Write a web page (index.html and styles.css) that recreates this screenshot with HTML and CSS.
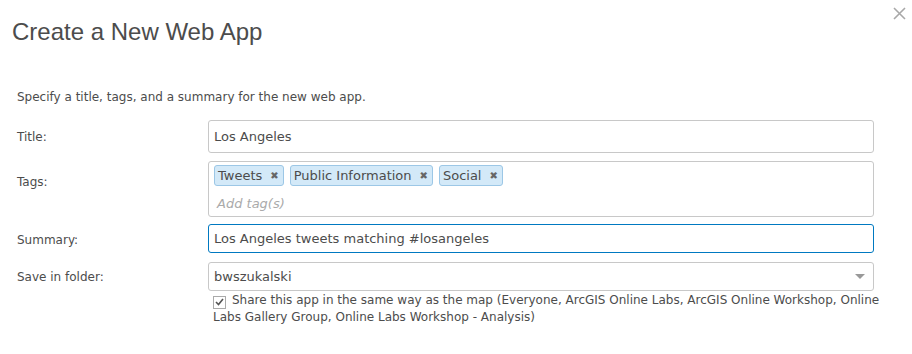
FILE: index.html
```html
<!DOCTYPE html>
<html lang="en">
<head>
  <meta charset="UTF-8">
  <title>Create a New Web App</title>
  <link rel="stylesheet" href="styles.css">
</head>
<body>
  <div class="dialog">
    <div class="dialog-header">
      <h1 class="dialog-title">Create a New Web App</h1>
      <span class="close-btn">
        <svg width="13" height="13" viewBox="0 0 13 13"><path d="M1 1 L12 12 M12 1 L1 12" stroke="#a8a8a8" stroke-width="1.6" fill="none"/></svg>
      </span>
    </div>

    <p class="intro">Specify a title, tags, and a summary for the new web app.</p>

    <div class="form">
      <label class="form-label row-title">Title:</label>
      <div class="form-control input-title">Los Angeles</div>

      <label class="form-label row-tags">Tags:</label>
      <div class="form-control tag-box">
        <div class="tag-list">
          <span class="tag">Tweets <span class="tag-x">&#x2716;</span></span>
          <span class="tag">Public Information <span class="tag-x">&#x2716;</span></span>
          <span class="tag">Social <span class="tag-x">&#x2716;</span></span>
        </div>
        <div class="tag-placeholder">Add tag(s)</div>
      </div>

      <label class="form-label row-summary">Summary:</label>
      <div class="form-control input-summary focused">Los Angeles tweets matching #losangeles</div>

      <label class="form-label row-folder">Save in folder:</label>
      <div class="folder-col">
        <div class="form-control select">
          <span>bwszukalski</span>
          <span class="caret"></span>
        </div>
        <div class="share">
          <span class="checkbox">
            <svg width="9" height="8" viewBox="0 0 9 8"><path d="M1 4 L3.5 6.5 L8 1" stroke="#555" stroke-width="1.6" fill="none"/></svg>
          </span>Share this app in the same way as the map (Everyone, ArcGIS Online Labs, ArcGIS Online Workshop, Online Labs Gallery Group, Online Labs Workshop - Analysis)
        </div>
      </div>
    </div>
  </div>
</body>
</html>
```

FILE: styles.css
```css
:root {
  --text-color: #4c4c4c;
  --border-color: #c8c8c8;
  --focus-color: #0079c1;
  --tag-bg: #d3e9f8;
  --tag-border: #9cc7e6;
}

body {
  margin: 0;
  background-color: #fff;
  font-family: 'DejaVu Sans', Verdana, sans-serif;
  font-size: 12px;
  color: var(--text-color);
}

.dialog {
  width: 912px;
  height: 354px;
  box-sizing: border-box;
  padding: 0 38px 0 17px;
}

.dialog-header {
  display: flex;
  justify-content: space-between;
  align-items: flex-start;
  height: 87px;
}

.dialog-title {
  margin: 18px 0 0 -5px;
  font-family: 'Liberation Sans', Arial, sans-serif;
  font-size: 24px;
  font-weight: 400;
  color: var(--text-color);
}

.close-btn {
  margin: 7px -32px 0 0;
  display: flex;
}

.intro {
  margin: 0 0 13px;
  line-height: 20px;
}

.form {
  display: grid;
  grid-template-columns: 191px 666px;
  row-gap: 8px;
  align-items: start;
}

.form-label {
  display: flex;
  align-items: center;
  height: 33px;
}

.row-tags {
  height: 41px;
}

.row-summary,
.row-folder {
  height: 29px;
}

.form-control {
  box-sizing: border-box;
  border: 1px solid var(--border-color);
  border-radius: 3px;
  padding: 0 5px;
  font-size: 13px;
  display: flex;
  align-items: center;
}

.input-title {
  height: 33px;
}

.input-summary {
  height: 29px;
  margin-top: -1px;
}

.focused {
  border-color: var(--focus-color);
}

.tag-box {
  height: 56px;
  flex-direction: column;
  align-items: flex-start;
  padding: 3px 5px;
}

.tag-list {
  display: flex;
  gap: 6px;
}

.tag {
  display: inline-flex;
  align-items: center;
  gap: 8px;
  height: 21px;
  padding: 0 4px 0 3px;
  box-sizing: border-box;
  background-color: var(--tag-bg);
  border: 1px solid var(--tag-border);
  border-radius: 3px;
}

.tag-x {
  font-size: 10px;
  color: #666;
}

.tag-placeholder {
  margin: 10px 0 0 3px;
  font-style: italic;
  color: #aaa;
}

.select {
  height: 29px;
  justify-content: space-between;
  padding-right: 8px;
}

.caret {
  width: 0;
  height: 0;
  border-left: 5px solid transparent;
  border-right: 5px solid transparent;
  border-top: 5px solid #999;
}

.share {
  margin: 1px -16px 0 5px;
  font-size: 12px;
  line-height: 17px;
}

.checkbox {
  display: inline-flex;
  align-items: center;
  justify-content: center;
  width: 11px;
  height: 11px;
  border: 1px solid #aaa;
  margin-right: 6px;
  vertical-align: -2px;
  background-color: #fff;
}
```
